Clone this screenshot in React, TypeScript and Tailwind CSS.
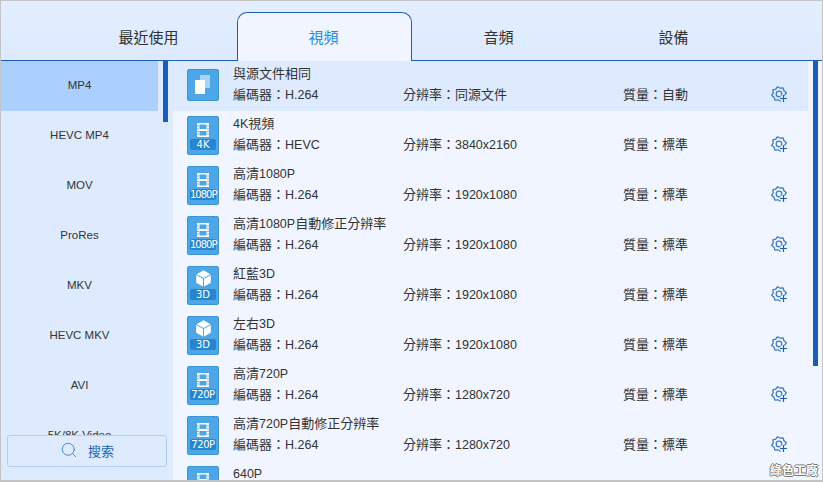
import { Search } from "lucide-react";

const font = "font-['Liberation_Sans','Noto_Sans_CJK_TC',sans-serif]";

const tabs = ["最近使用", "視頻", "音頻", "設備"];
const formats = ["MP4", "HEVC MP4", "MOV", "ProRes", "MKV", "HEVC MKV", "AVI", "5K/8K Video"];

const rows = [
  { title: "與源文件相同", codec: "H.264", res: "同源文件", quality: "自動", kind: "copy", badge: "" },
  { title: "4K視頻", codec: "HEVC", res: "3840x2160", quality: "標準", kind: "film", badge: "4K" },
  { title: "高清1080P", codec: "H.264", res: "1920x1080", quality: "標準", kind: "film", badge: "1080P" },
  { title: "高清1080P自動修正分辨率", codec: "H.264", res: "1920x1080", quality: "標準", kind: "film", badge: "1080P" },
  { title: "紅藍3D", codec: "H.264", res: "1920x1080", quality: "標準", kind: "cube", badge: "3D" },
  { title: "左右3D", codec: "H.264", res: "1920x1080", quality: "標準", kind: "cube", badge: "3D" },
  { title: "高清720P", codec: "H.264", res: "1280x720", quality: "標準", kind: "film", badge: "720P" },
  { title: "高清720P自動修正分辨率", codec: "H.264", res: "1280x720", quality: "標準", kind: "film", badge: "720P" },
  { title: "640P", codec: "H.264", res: "960x640", quality: "標準", kind: "film", badge: "640P" },
];

// 8 tooth gear outline around (8,8)
const gearPath = Array.from({ length: 16 }, (_, i) => {
  const a = ((i * 22.5 - 11.25) * Math.PI) / 180;
  const r = i % 2 === 0 ? 7.4 : 5.9;
  return `${i === 0 ? "M" : "L"}${(8 + r * Math.cos(a)).toFixed(2)} ${(8 + r * Math.sin(a)).toFixed(2)}`;
}).join("") + "Z";

// latin runs are a touch smaller than the CJK around them
const Mixed = ({ text }: { text: string }) => (
  <>
    {text.split(/([A-Za-z0-9.]+)/).map((part, i) =>
      i % 2 === 1 ? (
        <span key={i} className="text-[12.5px]">
          {part}
        </span>
      ) : (
        part
      )
    )}
  </>
);

const FilmIcon = () => (
  <svg width="12" height="14" viewBox="0 0 12 14" fill="none">
    <rect x="0" y="0" width="12" height="14" fill="#fff" />
    <rect x="2.5" y="1.5" width="7" height="4.5" fill="#4da6e6" />
    <rect x="2.5" y="8" width="7" height="4.5" fill="#4da6e6" />
    <path d="M0 3h2M0 6h2M0 8.5h2M0 11h2M10 3h2M10 6h2M10 8.5h2M10 11h2" stroke="#4da6e6" strokeWidth="0.8" />
  </svg>
);

const CubeIcon = () => (
  <svg width="15" height="17" viewBox="0 0 15 17">
    <path d="M7.5 0.3 14.4 4.2 7.5 8 0.6 4.2Z" fill="#fff" />
    <path d="M0.2 5 7 8.8v7.8L0.2 12.8Z" fill="#fff" />
    <path d="M14.8 5 8 8.8v7.8l6.8-3.8Z" fill="#fff" />
  </svg>
);

const CopyIcon = () => (
  <svg width="20" height="20" viewBox="0 0 20 20">
    <rect x="7" y="0" width="10" height="13" fill="#a9d5f5" />
    <rect x="2" y="5" width="10" height="14" fill="#fff" />
  </svg>
);

const GearIcon = () => (
  <svg width="17" height="17" viewBox="0 0 17 17" fill="none" className="-mt-[2px]">
    <mask id="gear-cut">
      <rect width="17" height="17" fill="#fff" />
      <rect x="9.5" y="9.5" width="7.5" height="7.5" fill="#000" />
    </mask>
    <g mask="url(#gear-cut)" stroke="#3f7cc4" strokeWidth="1.3" strokeLinejoin="round">
      <path d={gearPath} />
      <circle cx="8" cy="8" r="2.8" />
    </g>
    <path d="M12.5 9v7M9 12.5h7" stroke="#1a5fb4" strokeWidth="1.2" />
  </svg>
);

const RowIcon = ({ kind, badge }: { kind: string; badge: string }) => {
  if (kind === "copy") {
    return (
      <div className="w-8 h-8 mt-2 flex items-center justify-center rounded-[2px] bg-[#4da6e6] border border-[#3b94d8]">
        <CopyIcon />
      </div>
    );
  }
  return (
    <div className={`w-8 h-[39px] mt-[5px] flex flex-col items-center rounded-[2px] bg-[#4da6e6] border border-[#3b94d8] ${kind === "film" ? "pt-[6px]" : "pt-[3px]"}`}>
      {kind === "film" ? <FilmIcon /> : <CubeIcon />}
      <div className={`mt-auto mb-[4px] w-[26px] h-[11px] rounded-[2px] bg-[#2685cf] text-white text-[10px] leading-[12px] text-center font-['DejaVu_Sans',sans-serif] ${badge === "1080P" ? "text-[9px] tracking-[-1px]" : ""} ${badge.length === 4 ? "tracking-[-0.4px]" : ""}`}>
        {badge}
      </div>
    </div>
  );
};

export default function App() {
  return (
    <div className={`relative w-[823px] h-[482px] overflow-hidden border border-[#c4c4c4] border-b-2 bg-[#f0f5ff] text-[13px] text-[#333] ${font}`}>
      <nav className="flex h-[60px] pl-[61px] border-b border-[#1a5fb4] bg-gradient-to-b from-[#e3eeff] to-[#ddeaff]">
        {tabs.map((tab, i) => (
          <div
            key={tab}
            className={
              i === 1
                ? "relative z-10 w-[175px] h-[49px] mt-[11px] -mb-px flex items-center justify-center pr-[2px] pt-[3px] rounded-t-[10px] border border-b-0 border-[#1a5fb4] bg-[#f0f5ff] text-[15px] text-[#2a8ae0]"
                : "w-[175px] mt-[15px] flex items-center justify-center pr-[2px] text-[15px] text-[#333]"
            }
          >
            {tab}
          </div>
        ))}
      </nav>

      <div className="flex h-[420px]">
        <aside className="flex w-[172px] shrink-0 overflow-hidden bg-[#deebff]">
          <ul className="w-[157px] shrink-0">
            {formats.map((f, i) => (
              <li
                key={f}
                className={`h-[50px] flex items-center justify-center text-[11.5px] ${i === 0 ? "bg-[#abd0ff] h-[49px]" : ""}`}
              >
                {f}
              </li>
            ))}
          </ul>
          <div className="ml-[5px] w-[5px] h-[61px] bg-[#1a5fb4] shrink-0" />
        </aside>

        <div className="flex flex-1 overflow-hidden">
          <div className="w-[635px] shrink-0">
            {rows.map((r, i) => (
              <div key={r.title} className={`flex h-[50px] pl-[14px] ${i === 0 ? "bg-[#deebff]" : ""}`}>
                <RowIcon kind={r.kind} badge={r.badge} />
                <div className="ml-[14px] flex-1 pt-[3px]">
                  <div className="h-5 leading-5"><Mixed text={r.title} /></div>
                  <div className="flex h-5 mt-px leading-5 items-center">
                    <span className="w-[170px]">編碼器：<Mixed text={r.codec} /></span>
                    <span className="w-[220px]">分辨率：<Mixed text={r.res} /></span>
                    <span className="w-[148px]">質量：{r.quality}</span>
                    <GearIcon />
                  </div>
                </div>
              </div>
            ))}
          </div>
          <div className="ml-[5px] w-[5px] h-[305px] bg-[#1a5fb4] shrink-0" />
        </div>
      </div>

      <button className="absolute left-[6px] top-[434px] w-[160px] h-8 flex items-center justify-center gap-[10px] rounded-[3px] border border-[#b5cdf0] bg-[#deebff] text-[13px] text-[#1a5fb4]">
        <Search size={18} strokeWidth={1.2} color="#3f7cc4" className="-mt-[2px]" />
        <span className="pt-[2px]">搜索</span>
      </button>

      <div className="absolute right-[4px] bottom-[2px] text-[12px] leading-[14px] font-bold text-white [text-shadow:1px_0_#777,-1px_0_#777,0_1px_#777,0_-1px_#777]">
        綠色工廠
      </div>
    </div>
  );
}
